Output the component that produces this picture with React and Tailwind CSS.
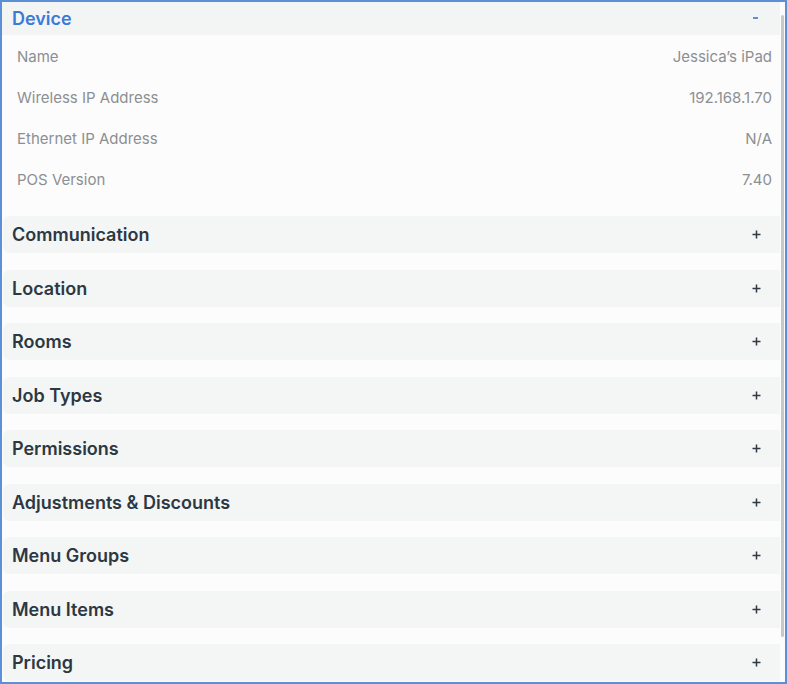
import React from 'react';

const details = [
  ['Name', 'Jessica’s iPad'],
  ['Wireless IP Address', '192.168.1.70'],
  ['Ethernet IP Address', 'N/A'],
  ['POS Version', '7.40'],
];

const sections = [
  'Communication',
  'Location',
  'Rooms',
  'Job Types',
  'Permissions',
  'Adjustments & Discounts',
  'Menu Groups',
  'Menu Items',
  'Pricing',
];

function Plus() {
  return (
    <svg width="9" height="9" viewBox="0 0 9 9" className="text-[#2f3a43]">
      <path d="M4.5 0.5v8M0.5 4.5h8" stroke="currentColor" strokeWidth="1.5" />
    </svg>
  );
}

export default function App() {
  return (
    <div
      className="relative w-[787px] h-[684px] overflow-hidden border-2 border-[#5b8fd8] bg-[#fcfcfc]"
      style={{ fontFamily: 'Inter, "Noto Sans", sans-serif' }}
    >
      {/* scrollbar */}
      <div className="absolute right-[1px] top-[13px] h-[622px] w-[3px] rounded-full bg-[#c6c8ca]" />

      <div className="flex flex-col pr-[5px]">
        <div className="flex h-[33px] items-center justify-between bg-[#f3f5f5] pl-[10px] pr-[22px]">
          <span className="text-[18px] font-semibold text-[#3a7ad9]">Device</span>
          <span className="mb-[2px] block h-[2px] w-[5px] bg-[#5b8fd8]" />
        </div>

        <div className="flex flex-col pl-[15px] pr-[8px] pt-[2px]">
          {details.map(([label, value]) => (
            <div key={label} className="flex h-[41px] items-center justify-between text-[15px] text-[#8c8f92]">
              <span>{label}</span>
              <span>{value}</span>
            </div>
          ))}
        </div>

        <div className="mt-[15px] flex flex-col gap-[16.5px] pl-[1px]">
          {sections.map((s) => (
            <div
              key={s}
              className="flex h-[37px] items-center justify-between rounded-l-[6px] bg-[#f4f5f5] pl-[9px] pr-[19px]"
            >
              <span className="text-[18px] font-semibold text-[#2c3842]">{s}</span>
              <Plus />
            </div>
          ))}
        </div>
      </div>
    </div>
  );
}
